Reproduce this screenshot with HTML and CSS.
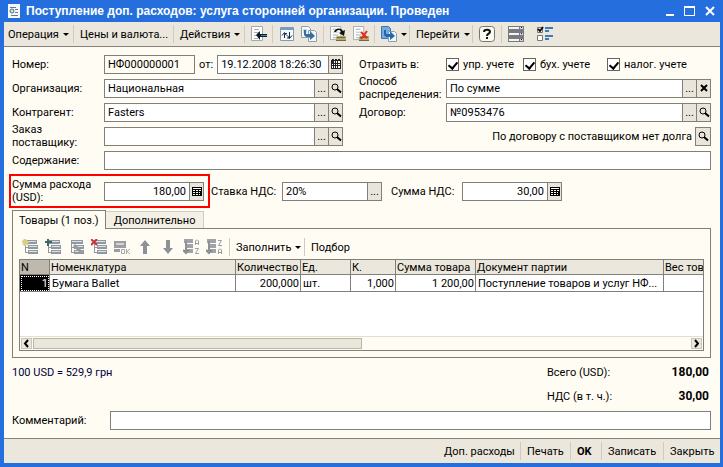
FILE: index.html
```html
<!DOCTYPE html>
<html lang="ru">
<head>
<meta charset="utf-8">
<title>Поступление доп. расходов</title>
<link rel="stylesheet" href="styles.css">
</head>
<body>
<svg class="defs" aria-hidden="true">
  <symbol id="lens" viewBox="0 0 12 12"><circle cx="5" cy="5" r="3" fill="none" stroke="#000"/><path d="M7 7l4 3.500" stroke="#000" stroke-width="2"/></symbol>
  <symbol id="calc" viewBox="0 0 12 12"><path fill="#000" d="M1 2h10v9H1z"/><path fill="#fff" d="M2 3h8v1H2zM2 5h2v1H2zM5 5h2v1H5zM8 5h2v1H8zM2 7h2v1H2zM5 7h2v1H5zM8 7h1v1H8zM2 9h2v1H2zM5 9h2v1H5zM8 9h1v1H8z"/></symbol>
  <symbol id="calendar" viewBox="0 0 12 12"><path fill="#222" d="M2 1h2v1h1V1h2v1h1V1h2v1h1v9H1V2h1z"/><path fill="#fff" d="M4 3h1v2H4zM6 3h1v2H6zM8 3h2v2H8zM2 6h1v1H2zM4 6h1v1H4zM6 6h1v1H6zM8 6h2v1H8zM2 8h1v2H2zM4 8h1v2H4zM6 8h1v2H6zM8 8h2v2H8z"/></symbol>
  <symbol id="rows" viewBox="0 0 16 16"><path fill="#8f97a0" d="M3 1h12v4H3zM6 6h10v4H6zM6 11h10v4H6z"/><path fill="#dfe3e5" d="M4 2h10v1H4zM7 7h8v1H7zM7 12h8v1H7z"/><path fill="#8f97a0" d="M3 5h1v9H3zM3 8h3v1H3zM3 13h3v1H3z"/></symbol>
  <symbol id="sheet" viewBox="0 0 16 16"><path fill="#fff" stroke="#a4a9ad" d="M.5.5h11v14H.5z"/><path fill="#a8adb0" d="M3 3h5v1H3zM3 6h6v1H3zM3 9h6v1H3zM3 12h4v1H3z"/></symbol>
</svg>
<div class="window">
  <header class="titlebar">
    <svg class="app-icon" viewBox="0 0 12 14"><path fill="#f6f8fa" d="M0 0h12v14H0z"/><path stroke="#667b91" fill="none" d="M2 3.500h6M7 5.500h3M7 8.500h3M3 11.500h7"/><circle cx="4" cy="7" r="2" fill="#cfe3ec" stroke="#466c88"/></svg>
    <h1>Поступление доп. расходов: услуга сторонней организации. Проведен</h1>
    <div class="window-buttons">
      <button aria-label="Свернуть"><svg viewBox="0 0 12 12"><path fill="#fff" d="M2 9h8v2H2z"/></svg></button>
      <button aria-label="Развернуть"><svg viewBox="0 0 12 12"><path fill="#fff" d="M0 1h11v10H0zM1 3v7h9V3z" fill-rule="evenodd"/></svg></button>
      <button aria-label="Закрыть окно"><svg viewBox="0 0 12 12"><path stroke="#fff" stroke-width="2" d="M2 2l8 8M10 2l-8 8"/></svg></button>
    </div>
  </header>

  <nav class="toolbar main-tools">
    <button class="drop">Операция</button>
    <button>Цены и валюта...</button>
    <button class="drop">Действия</button>
    <button aria-label="К списку"><svg class="icon" viewBox="0 0 16 16"><use href="#sheet" width="16" height="16"/><path fill="#0b1c2c" d="M5 9l4-4v3h7v3H9v3z"/><path fill="#4d86b5" d="M10 9h6v1h-6z"/></svg></button>
    <button aria-label="Перечитать"><svg class="icon" viewBox="0 0 16 16"><path fill="#f8fbfc" stroke="#7e9db4" d="M1.500 1.500h13v13h-13z"/><path fill="#6e9fcb" d="M2 2h12v2H2z"/><path fill="none" stroke="#1d2c3a" d="M5.500 12V7.500H8M3 9.500l2.500-3 2 3M10.500 6v6H8M8.500 9.500l2 3 2.500-3"/></svg></button>
    <button class="plain" aria-label="Скопировать"><svg class="icon" viewBox="0 0 16 16"><path fill="#f4f7f8" stroke="#8da0ae" d="M.5.500h7l2 2v9h-9zM7.500 4.500h6l2 2v9h-8z"/><path fill="#c8dae5" d="M2 3h4v4H2z"/><path fill="#366f9f" d="M3 4h2v4h4V5l5 5-5 4v-3H5l-2-2z"/></svg></button>
    <button aria-label="Провести"><svg class="icon" viewBox="0 0 16 16"><use href="#sheet" width="15" height="15"/><path fill="#b8a96d" d="M7 10h9v5H6v-4z"/><path stroke="#6e684f" d="M7 11.500h8M6 14.500h10"/><path d="M4 6c1-4 7-5 9-1l2-1-1 6-5-3 2-1c-1-3-4-2-5 0z" fill="#111"/></svg></button>
    <button class="plain" aria-label="Отменить проведение"><svg class="icon" viewBox="0 0 16 16"><use href="#sheet" width="15" height="15"/><path fill="#b8a96d" d="M7 10h9v5H6v-4z"/><path stroke="#6e684f" d="M7 11.500h8M6 14.500h10"/><path stroke="#e32a20" stroke-width="2" d="M8 6l6 6M14 5l-6 8"/></svg></button>
    <button class="drop" aria-label="Ввести на основании"><svg class="icon" viewBox="0 0 16 16"><path fill="#78a9df" stroke="#3c75b4" d="M.5.500h7l2 2v10h-9z"/><path fill="#f4f7f8" stroke="#8da0ae" d="M7.500 5.500h6l2 2v8h-8z"/><path fill="#1f68b2" d="M3 4h2v4h4V5l5 5-5 4v-3H5l-2-2z"/></svg></button>
    <button class="drop">Перейти</button>
    <button aria-label="Справка"><svg class="icon" viewBox="0 0 16 16"><rect x=".5" y=".5" width="15" height="15" rx="3" fill="#fbfaf3" stroke="#77746a"/><path fill="none" stroke="#111" stroke-width="2" d="M5 6c0-3 6-3 6 0 0 2-3 1-3 4"/><path fill="#111" d="M7 11h2v2H7z"/></svg></button>
    <button aria-label="Список"><svg class="icon" viewBox="0 0 16 16"><path fill="#777b80" d="M0 0h16v5H0zM0 5h16v6H0zM0 11h16v5H0z"/><path fill="#f5f5f0" d="M1 1h10v2H1zM1 7h10v2H1zM1 13h10v2H1z"/><path fill="#d4d5d6" d="M12 1h3v2h-3zM12 7h3v2h-3zM12 13h3v2h-3z"/><path fill="#222" d="M13 1h1v1h-1zM13 7h1v1h-1zM13 13h1v1h-1z"/></svg></button>
    <button class="plain" aria-label="Настройка"><svg class="icon" viewBox="0 0 16 16"><path fill="#fff" stroke="#777" d="M.5 1.500h5v5h-5zM.5 9.500h5v5h-5z"/><path stroke="#111" fill="none" stroke-width="2" d="M1 3l2 2 3-4"/><path fill="#397cbc" d="M8 1h8v2H8zM8 4h4v2H8zM8 9h8v2H8zM8 12h4v2H8z"/></svg></button>
  </nav>

  <main class="form">
    <div class="fields">
      <label for="number">Номер:</label>
      <div class="line">
        <input class="box number" id="number" value="НФ000000001" readonly>
        <label for="date">от:</label>
        <div class="box grow"><input id="date" value="19.12.2008 18:26:30"><button aria-label="Календарь"><svg><use href="#calendar"/></svg></button></div>
      </div>
      <span class="second">Отразить в:</span>
      <div class="line checks">
        <label><input type="checkbox" checked>упр. учете</label>
        <label><input type="checkbox" checked>бух. учете</label>
        <label><input type="checkbox" checked>налог. учете</label>
      </div>

      <label for="org">Организация:</label>
      <div class="box"><input id="org" value="Национальная"><button aria-label="Выбрать">...</button><button aria-label="Открыть"><svg><use href="#lens"/></svg></button></div>
      <label class="second" for="method">Способ распределения:</label>
      <div class="box"><input id="method" value="По сумме"><button aria-label="Выбрать">...</button><button aria-label="Очистить"><svg viewBox="0 0 12 12"><path stroke="#000" stroke-width="2" d="M3 3l6 6M9 3l-6 6"/></svg></button></div>

      <label for="agent">Контрагент:</label>
      <div class="box"><input id="agent" value="Fasters"><button aria-label="Выбрать">...</button><button aria-label="Открыть"><svg><use href="#lens"/></svg></button></div>
      <label class="second" for="contract">Договор:</label>
      <div class="box"><input id="contract" value="№0953476"><button aria-label="Выбрать">...</button><button aria-label="Открыть"><svg><use href="#lens"/></svg></button></div>

      <label for="order">Заказ поставщику:</label>
      <div class="box"><input id="order"><button aria-label="Выбрать">...</button><button aria-label="Открыть"><svg><use href="#lens"/></svg></button></div>
      <div class="debt">По договору с поставщиком нет долга<div class="box"><button aria-label="Открыть долг"><svg><use href="#lens"/></svg></button></div></div>

      <label for="content">Содержание:</label>
      <input class="box wide" id="content">
    </div>

    <div class="amounts">
      <div class="marked">
        <label for="sum">Сумма расхода (USD):</label>
        <div class="box amount"><input id="sum" class="num" value="180,00"><button aria-label="Калькулятор"><svg><use href="#calc"/></svg></button></div>
      </div>
      <label for="rate">Ставка НДС:</label>
      <div class="box amount"><input id="rate" value="20%"><button aria-label="Выбрать">...</button></div>
      <label class="vat-label" for="vat">Сумма НДС:</label>
      <div class="box amount"><input id="vat" class="num" value="30,00"><button aria-label="Калькулятор"><svg><use href="#calc"/></svg></button></div>
    </div>

    <div class="tabs" role="tablist">
      <button class="active" role="tab" aria-selected="true">Товары (1 поз.)</button>
      <button role="tab" aria-selected="false">Дополнительно</button>
    </div>
    <section class="panel">
      <div class="toolbar table-tools">
        <button aria-label="Добавить"><svg class="icon" viewBox="0 0 16 16"><use href="#rows" width="16" height="16"/><path stroke="#d9cf8b" stroke-width="2" d="M3 0v7M0 3h7M1 1l5 5M5 1L1 6"/></svg></button>
        <button aria-label="Вставить"><svg class="icon" viewBox="0 0 16 16"><use href="#rows" width="16" height="16"/><path stroke="#3d6b62" stroke-width="2" d="M3 0v7M0 3h7"/></svg></button>
        <button aria-label="Изменить"><svg class="icon" viewBox="0 0 16 16"><use href="#rows" width="16" height="16"/><path stroke="#999a9c" stroke-width="3" d="M6 6l8 8"/></svg></button>
        <button aria-label="Удалить"><svg class="icon" viewBox="0 0 16 16"><use href="#rows" width="16" height="16"/><path stroke="#c8353b" stroke-width="2" d="M0 0l6 6M6 0L0 6"/></svg></button>
        <button aria-label="Закончить"><svg class="icon" viewBox="0 0 16 16"><path fill="#9b9da0" d="M0 2h12v7H0zM0 10h6v3H0z"/><path fill="#d5d6d3" d="M2 4h8v2H2z"/><path fill="none" stroke="#a8a9aa" d="M7.500 10.500h3v4h-3zM12.500 10v5M16 10l-3 2.500 3 2.500"/></svg></button>
        <button aria-label="Вверх"><svg class="icon" viewBox="0 0 16 16"><path fill="#8e9297" d="M8 1l5 6h-3v8H6V7H3z"/></svg></button>
        <button aria-label="Вниз"><svg class="icon" viewBox="0 0 16 16"><path fill="#8e9297" d="M6 1h4v8h3l-5 6-5-6h3z"/></svg></button>
        <button aria-label="По возрастанию"><svg class="icon" viewBox="0 0 16 16"><path fill="#a0a3a7" d="M1 0h9v4H1zM3 5h7v4H3zM3 10h7v4H3z"/><path stroke="#8e9297" stroke-width="2" d="M3 2v12M0 11l3 3 3-3"/><path fill="none" stroke="#9c9ea1" d="M12.500 6V2l1-1h1l1 1v4M12 4.500h3M12 9.500h3.500l-3 5H16"/></svg></button>
        <button aria-label="По убыванию"><svg class="icon" viewBox="0 0 16 16"><path fill="#a0a3a7" d="M1 0h9v4H1zM3 5h7v4H3zM3 10h7v4H3z"/><path stroke="#8e9297" stroke-width="2" d="M3 2v12M0 11l3 3 3-3"/><path fill="none" stroke="#9c9ea1" d="M12 1.500h3.500l-3 5H16M12.500 15v-4l1-1h1l1 1v4M12 13.500h3"/></svg></button>
        <button class="drop ruled">Заполнить</button>
        <button class="ruled">Подбор</button>
      </div>
      <div class="grid-box">
        <div class="rows">
          <table>
            <colgroup><col class="c-n"><col class="c-name"><col class="c-qty"><col class="c-unit"><col class="c-k"><col class="c-sum"><col class="c-doc"><col></colgroup>
            <thead><tr><th>N</th><th>Номенклатура</th><th>Количество</th><th>Ед.</th><th>К.</th><th>Сумма товара</th><th>Документ партии</th><th>Вес тов</th></tr></thead>
            <tbody><tr><td class="current">1</td><td>Бумага Ballet</td><td class="num">200,000</td><td>шт.</td><td class="num">1,000</td><td class="num">1 200,00</td><td>Поступление товаров и услуг НФ...</td><td></td></tr></tbody>
          </table>
        </div>
        <div class="scroll">
          <button aria-label="Влево"><svg viewBox="0 0 9 9"><path fill="none" stroke="#000" stroke-width="2" d="M6 1L3 4.500 6 8"/></svg></button>
          <div class="track"><div class="thumb"></div></div>
          <button aria-label="Вправо"><svg viewBox="0 0 9 9"><path fill="none" stroke="#000" stroke-width="2" d="M3 1l3 3.500L3 8"/></svg></button>
        </div>
      </div>
    </section>

    <div class="totals">
      <span class="rate">100 USD = 529,9 грн</span><span>Всего (USD):</span><strong>180,00</strong>
      <span class="rate"></span><span>НДС (в т. ч.):</span><strong>30,00</strong>
    </div>
    <div class="comment">
      <label for="comment">Комментарий:</label>
      <input class="box" id="comment">
    </div>
  </main>

  <footer class="toolbar actions">
    <button>Доп. расходы</button>
    <button>Печать</button>
    <button class="ok">OK</button>
    <button>Записать</button>
    <button>Закрыть</button>
  </footer>
</div>
</body>
</html>
```
FILE: styles.css
```css
* { box-sizing: border-box; }

body {
  margin: 0;
  font: 11px/13px Roboto, "Liberation Sans", sans-serif;
  color: #000;
}

button, input { font: inherit; color: inherit; }
button { margin: 0; padding: 0; border: 0; background: none; white-space: nowrap; }
svg { display: block; }
.defs { position: absolute; width: 0; height: 0; }

.window {
  min-height: 100vh;
  display: flex;
  flex-direction: column;
  border: solid #246fdd;
  border-width: 0 3px 4px 4px;
  background: #fffcf3;
}

/* Title bar */
.titlebar {
  height: 22px;
  display: flex;
  align-items: center;
  gap: 6px;
  padding: 0 4px;
  background: #246fdd;
  color: #fff;
}
.app-icon { width: 12px; height: 14px; }
h1 { flex: 1; margin: 0; font: bold 12px/16px "Liberation Sans", sans-serif; white-space: nowrap; }
.window-buttons { display: flex; gap: 8px; }
.window-buttons svg { width: 12px; height: 12px; }

/* Toolbars */
.toolbar { display: grid; align-items: center; }
.toolbar button { display: flex; align-items: center; height: 18px; }
.icon { width: 16px; height: 16px; flex: none; }
.drop::after {
  content: "";
  margin-left: 4px;
  border: solid transparent;
  border-width: 3px 3px 0;
  border-top-color: #000;
}
.main-tools {
  height: 25px;
  grid-template-columns: 69px 100px 71px 28px 22px 29px 23px 28px 35px 63px 29px 29px 24px;
  border-bottom: 1px solid #85837c;
  background: #ebe7dc;
}
.main-tools button { padding-left: 6px; border-left: 1px solid #cfcbc0; }
.main-tools button:first-child { padding-left: 3px; }
.main-tools button:first-child, .main-tools .plain { border-color: transparent; }

/* Form */
.form { flex: 1; padding: 5px 9px 7px 8px; }
.fields {
  display: grid;
  grid-template-columns: 92px minmax(0, 239fr) 103px minmax(0, 265fr);
  grid-auto-rows: 24px;
  align-items: center;
}
.second { padding-left: 16px; }
.line { display: flex; align-items: center; gap: 4px; }
.box {
  height: 19px;
  min-width: 0;
  display: flex;
  border: 1px solid #807f79;
  background: #fff;
}
.box input { flex: 1; min-width: 0; border: 0; background: none; }
input { padding: 0 3px; outline: none; }
.box button {
  flex: none;
  width: 14px;
  display: grid;
  place-items: center;
  border-left: 1px solid #807f79;
  background: #e9e5da;
}
.box button:only-child { border-left: 0; }
.box svg { width: 12px; height: 12px; }
.num { text-align: right; }
.number { width: 91px; background: #fffcf3; }
.grow { flex: 1; }
.wide { grid-column: 2 / -1; }
.checks { display: grid; grid-template-columns: 77px 84px auto; gap: 0; }
.checks label { display: flex; align-items: center; gap: 4px; white-space: nowrap; }
.checks input {
  appearance: none;
  width: 13px;
  height: 13px;
  margin: 0;
  padding: 0;
  border: 1px solid #66645f;
  background: #fff;
}
.checks input:checked::before {
  content: "";
  display: block;
  width: 4px;
  height: 7px;
  margin: 1px auto;
  border: solid #000;
  border-width: 0 2px 2px 0;
  transform: rotate(40deg);
}
.debt {
  grid-column: 3 / -1;
  display: flex;
  justify-content: flex-end;
  align-items: center;
  gap: 3px;
}

/* Amounts */
.amounts { display: flex; align-items: center; margin-top: 3px; padding: 2px 0; }
.amounts > label { width: 71px; margin-left: 4px; white-space: nowrap; }
.amounts > .vat-label { margin-left: 9px; }
.marked {
  height: 28px;
  display: flex;
  align-items: center;
  padding-right: 3px;
  outline: 2px solid #f00;
  outline-offset: 1px;
}
.marked label { width: 92px; padding-right: 8px; }
.amount { width: 100px; }

/* Tabs and table */
.tabs { display: flex; align-items: flex-end; margin-top: 3px; }
.tabs button {
  height: 17px;
  padding: 0 8px;
  border: 1px solid #d0ccc0;
  border-width: 1px 1px 0 0;
  background: #f4f0e6;
}
.tabs .active {
  position: relative;
  height: 19px;
  margin-bottom: -1px;
  padding: 0 6px;
  border: 1px solid #807f79;
  border-bottom: 0;
  background: #fffcf3;
}
.panel { padding: 6px; border: 1px solid #807f79; }
.table-tools { height: 24px; padding-left: 3px; grid-template-columns: repeat(9, 23px) 75px auto; }
.table-tools .ruled { padding-left: 6px; border-left: 1px solid #cfcbc0; }
.grid-box { border: 1px solid #807f79; background: #fff; }
.rows { height: 76px; overflow: hidden; }
table { width: 100%; table-layout: fixed; border-collapse: separate; border-spacing: 0; }
.c-n { width: 30px; }
.c-name { width: 186px; }
.c-qty { width: 65px; }
.c-unit { width: 50px; }
.c-k { width: 45px; }
.c-sum { width: 80px; }
.c-doc { width: 188px; }
th, td {
  padding: 0 1px;
  border: solid #807f79;
  border-width: 0 1px 1px 0;
  text-align: left;
  font-weight: normal;
  white-space: nowrap;
  overflow: hidden;
}
th { height: 15px; background: #ebe7dc; }
th:first-child { background: #bfb9ad; }
td { height: 17px; padding: 0 1px 0 2px; }
th:last-child, td:last-child { border-right: 0; }
td.num, td.current { text-align: right; }
td.current { background: #000; color: #fff; outline: 1px dotted #fff; outline-offset: -2px; }
.scroll {
  height: 14px;
  display: flex;
  gap: 1px;
  padding: 1px;
  border-top: 1px solid #e2dfd0;
  background: #fffcf3;
}
.scroll button { width: 11px; display: grid; place-items: center; border: 1px solid #c9c5b8; background: #ebe7dc; }
.scroll svg { width: 9px; height: 9px; }
.track { flex: 1; display: flex; }
.thumb { width: 50%; border: 1px solid #b9b6a9; background: #e9e6da; }

/* Totals, comment, actions */
.totals {
  display: grid;
  grid-template-columns: 1fr 93px 71px;
  grid-auto-rows: 24px;
  align-items: center;
  margin-top: 2px;
}
.totals .rate { color: #000040; }
.totals strong { text-align: right; font-size: 12px; padding-right: 2px; }
.comment { display: flex; align-items: center; margin-top: 3px; }
.comment label { width: 98px; }
.comment input { flex: 1; }
.actions {
  height: 25px;
  grid-template-columns: 83px 50px 31px 62px 57px;
  justify-content: end;
  border-top: 1px solid #85837c;
  background: #ebe7dc;
}
.actions button { padding-left: 6px; border-left: 1px solid #cfcbc0; }
.actions button:first-child { border-color: transparent; }
.ok { font-weight: bold; }
```
